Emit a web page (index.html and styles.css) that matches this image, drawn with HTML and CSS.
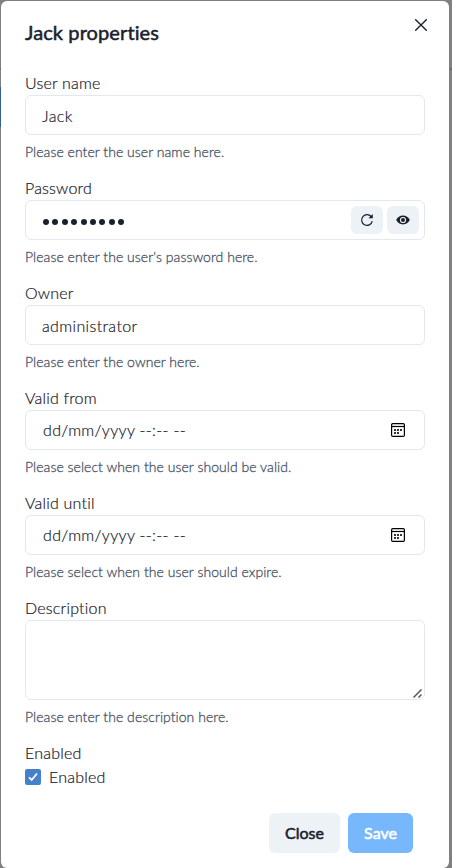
FILE: index.html
```html
<!DOCTYPE html>
<html lang="en">
<head>
<meta charset="utf-8">
<title>Jack properties</title>
<link rel="stylesheet" href="styles.css">
</head>
<body>
<section class="modal" role="dialog" aria-labelledby="title">
  <header class="header">
    <h1 id="title">Jack properties</h1>
    <button class="dismiss" aria-label="Close dialog"><svg width="12" height="12" viewBox="0 0 12 12"><path d="M.7.7l10.6 10.6M11.3.7L.7 11.3"/></svg></button>
  </header>
  <form class="form">
    <div class="field">
      <label class="label">User name</label>
      <div class="input"><span>Jack</span></div>
      <p class="help">Please enter the user name here.</p>
    </div>
    <div class="field">
      <label class="label">Password</label>
      <div class="input">
        <span class="dots"><i></i><i></i><i></i><i></i><i></i><i></i><i></i><i></i><i></i></span>
        <div class="tools">
          <button type="button" class="tool" aria-label="Generate"><svg width="14" height="14" viewBox="0 0 14 14"><path class="arc" d="M11.6 4.1A5.4 5.4 0 1 0 12.3 8.2"/><path d="M12.8.9v4.3H8.5z"/></svg></button>
          <button type="button" class="tool" aria-label="Show"><svg width="14" height="14" viewBox="0 0 14 14"><path fill-rule="evenodd" d="M.2 7C1.5 4.3 4 2.6 7 2.6S12.5 4.3 13.8 7C12.5 9.7 10 11.4 7 11.4S1.5 9.7.2 7zM7 3.9a3.1 3.1 0 1 0 0 6.2a3.1 3.1 0 0 0 0-6.2z"/><circle cx="7" cy="7" r="2"/></svg></button>
        </div>
      </div>
      <p class="help">Please enter the user's password here.</p>
    </div>
    <div class="field">
      <label class="label">Owner</label>
      <div class="input"><span>administrator</span></div>
      <p class="help">Please enter the owner here.</p>
    </div>
    <div class="field">
      <label class="label">Valid from</label>
      <div class="input date"><span>dd/mm/yyyy --:-- --</span><svg class="cal" width="14" height="14" viewBox="0 0 14 14"><rect x=".6" y=".6" width="12.8" height="12.8" rx="1.2"/><path d="M1 3.5h12"/><path class="marks" d="M3 6h2v2H3zM6 6h2v2H6zM9 6h2v2H9zM3 9h2v2H3zM6 9h2v2H6z"/></svg></div>
      <p class="help">Please select when the user should be valid.</p>
    </div>
    <div class="field">
      <label class="label">Valid until</label>
      <div class="input date"><span>dd/mm/yyyy --:-- --</span><svg class="cal" width="14" height="14" viewBox="0 0 14 14"><rect x=".6" y=".6" width="12.8" height="12.8" rx="1.2"/><path d="M1 3.5h12"/><path class="marks" d="M3 6h2v2H3zM6 6h2v2H6zM9 6h2v2H9zM3 9h2v2H3zM6 9h2v2H6z"/></svg></div>
      <p class="help">Please select when the user should expire.</p>
    </div>
    <div class="field">
      <label class="label">Description</label>
      <div class="input area"><svg class="grip" width="9" height="9" viewBox="0 0 9 9"><path d="M.5 8.5l8-8M5.5 8.5l3-3"/></svg></div>
      <p class="help">Please enter the description here.</p>
    </div>
    <div class="field">
      <label class="label">Enabled</label>
      <div class="check"><span class="box"><svg width="10" height="10" viewBox="0 0 10 10"><path d="M1 5.3l2.7 2.7L9 1.5"/></svg></span>Enabled</div>
    </div>
  </form>
  <footer class="footer">
    <button class="btn close">Close</button>
    <button class="btn save">Save</button>
  </footer>
</section>
</body>
</html>
```
FILE: styles.css
```css
* { box-sizing: border-box; margin: 0; padding: 0; }
body {
  height: 868px;
  padding: 1px 3px 0 1px;
  overflow: hidden;
  font: 300 16px/24px Lato, "Liberation Sans", sans-serif;
  font-variant-ligatures: none;
  -webkit-text-stroke: .2px;
  color: #1a202c;
  background:
    linear-gradient(#315f91, #315f91) 0 87px / 1px 40px no-repeat,
    linear-gradient(#6f7072, #6f7072) 0 68px / 100% 2px no-repeat,
    #808080;
}
button { border: 0; font: inherit; color: inherit; }
.modal { height: 867px; padding: 0 24px; border-radius: 6px; background: #fff; }
.header { display: flex; justify-content: space-between; height: 70px; padding-top: 16px; }
h1 { font-size: 20px; line-height: 30px; font-weight: 400; letter-spacing: .1px; -webkit-text-stroke: .5px; }
.dismiss { display: flex; align-items: center; justify-content: center; width: 32px; height: 32px; margin: -8px -12px 0 0; background: none; }
.dismiss path { fill: none; stroke: #1a202c; stroke-width: 1.4; stroke-linecap: round; }
.form { display: flex; flex-direction: column; gap: 16px; }
.label { display: block; height: 24px; letter-spacing: .2px; }
.input { display: flex; align-items: center; justify-content: space-between; height: 40px; padding: 2px 5px 0 16px; border: 1px solid #e2e8f0; border-radius: 6px; letter-spacing: .36px; }
.help { height: 17px; margin-top: 8px; font-size: 14px; line-height: 18px; letter-spacing: .05px; color: #4a5568; -webkit-text-stroke: .3px; }
.dots { display: flex; gap: 3.4px; padding: 2px 0 0 1px; }
.dots i { width: 6px; height: 6px; border-radius: 50%; background: #1a202c; }
.tools { display: flex; gap: 4px; margin-top: -2px; }
.tool { display: flex; align-items: center; justify-content: center; width: 32px; height: 28px; border-radius: 6px; background: #edf2f7; }
.tool path, .tool circle { fill: #1a202c; }
.tool .arc { fill: none; stroke: #1a202c; stroke-width: 1.2; }
.date { padding: 0 19px 0 17px; letter-spacing: .33px; }
.cal { fill: none; stroke: #000; stroke-width: 1.2; }
.cal .marks { fill: #333; stroke: none; }
.area { height: 80px; align-items: flex-end; justify-content: flex-end; padding: 0 2px 1px; }
.grip { fill: none; stroke: #555; stroke-width: 1.5; }
.check { display: flex; align-items: center; gap: 8px; letter-spacing: .2px; }
.box { display: flex; align-items: center; justify-content: center; width: 16px; height: 16px; border-radius: 2px; background: #4480cb; }
.box path { fill: none; stroke: #fff; stroke-width: 1.8; }
.footer { display: flex; justify-content: flex-end; gap: 8px; padding: 24px 12px 0 0; }
.btn { height: 40px; border-radius: 6px; font-weight: 400; -webkit-text-stroke: .55px; }
.close { width: 71px; background: #edf2f7; }
.save { width: 65px; color: #fff; background: #77b8fc; }
```
